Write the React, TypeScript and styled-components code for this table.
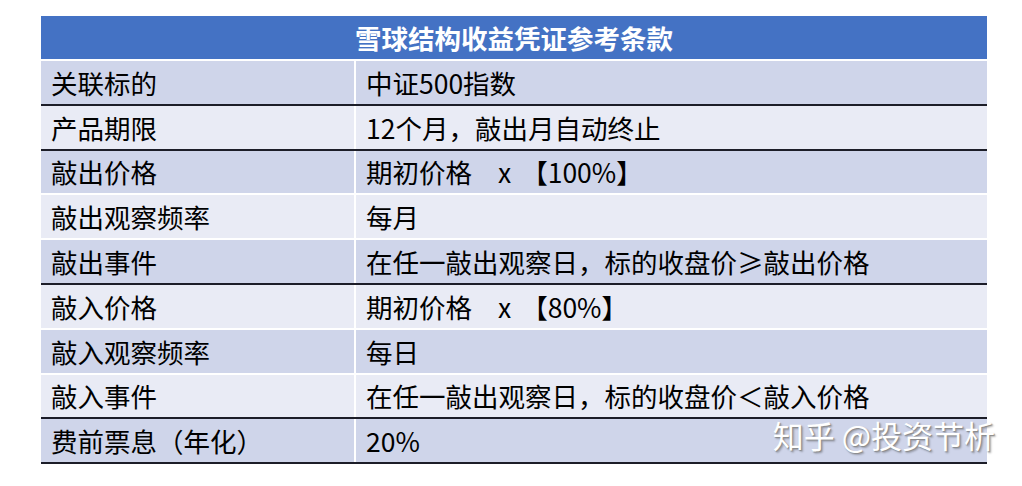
import React from 'react';
import styled, { createGlobalStyle } from 'styled-components';

type Shade = 'dark' | 'light';
type Line = 'dark' | 'white';

type Row = {
  label: string;
  value: React.ReactNode;
  shade: Shade;
  line: Line;
};

const GlobalStyle = createGlobalStyle`
  html, body {
    margin: 0;
    padding: 0;
    background: #fff;
  }
  body {
    font-family: "Noto Sans CJK SC", "Noto Sans", sans-serif;
    color: #000;
  }
`;

const Page = styled.div`
  width: 1022px;
  height: 486px;
  padding: 16px 0 0 41px;
  box-sizing: border-box;
  overflow: hidden;
`;

const Table = styled.div`
  position: relative;
  width: 946px;
  display: flex;
  flex-direction: column;
`;

const Title = styled.div`
  height: 43px;
  margin-bottom: 2px;
  background: #4472c4;
  color: #fff;
  font-size: 26.5px;
  font-weight: 700;
  display: flex;
  align-items: center;
  justify-content: center;
`;

const TableRow = styled.div<{ $shade: Shade; $line: Line }>`
  display: grid;
  grid-template-columns: 313px 1fr;
  column-gap: 2px;
  height: 42.8px;
  background: #fff;
  border-bottom: 2px solid ${(p) => (p.$line === 'dark' ? '#1c1d28' : '#ffffff')};
  & > div {
    background: ${(p) => (p.$shade === 'dark' ? '#cfd5ea' : '#e9ebf5')};
  }
`;

const Cell = styled.div`
  display: flex;
  align-items: center;
  padding-left: 10px;
  font-size: 26.5px;
  white-space: nowrap;
`;

const Times = styled.span`
  margin: 0 10px 0 26px;
`;

const Watermark = styled.div`
  position: absolute;
  right: -8px;
  bottom: 7px;
  font-size: 31px;
  color: #fff;
  text-shadow: 1px 1px 1px #8a8a8a, 2px 2px 2px rgba(0, 0, 0, 0.25);
  white-space: nowrap;
`;

const rows: Row[] = [
  { label: '关联标的', value: '中证500指数', shade: 'dark', line: 'dark' },
  { label: '产品期限', value: '12个月，敲出月自动终止', shade: 'light', line: 'dark' },
  {
    label: '敲出价格',
    value: (
      <>
        期初价格<Times>x</Times>【100%】
      </>
    ),
    shade: 'dark',
    line: 'white',
  },
  { label: '敲出观察频率', value: '每月', shade: 'light', line: 'white' },
  { label: '敲出事件', value: '在任一敲出观察日，标的收盘价≥敲出价格', shade: 'dark', line: 'dark' },
  {
    label: '敲入价格',
    value: (
      <>
        期初价格<Times>x</Times>【80%】
      </>
    ),
    shade: 'light',
    line: 'white',
  },
  { label: '敲入观察频率', value: '每日', shade: 'dark', line: 'white' },
  { label: '敲入事件', value: '在任一敲出观察日，标的收盘价＜敲入价格', shade: 'light', line: 'dark' },
  { label: '费前票息（年化）', value: '20%', shade: 'dark', line: 'dark' },
];

const App = () => {
  return (
    <Page>
      <GlobalStyle />
      <Table>
        <Title>雪球结构收益凭证参考条款</Title>
        {rows.map((row) => (
          <TableRow key={row.label} $shade={row.shade} $line={row.line}>
            <Cell>{row.label}</Cell>
            <Cell>{row.value}</Cell>
          </TableRow>
        ))}
        <Watermark>知乎 @投资节析</Watermark>
      </Table>
    </Page>
  );
};

export default App;
